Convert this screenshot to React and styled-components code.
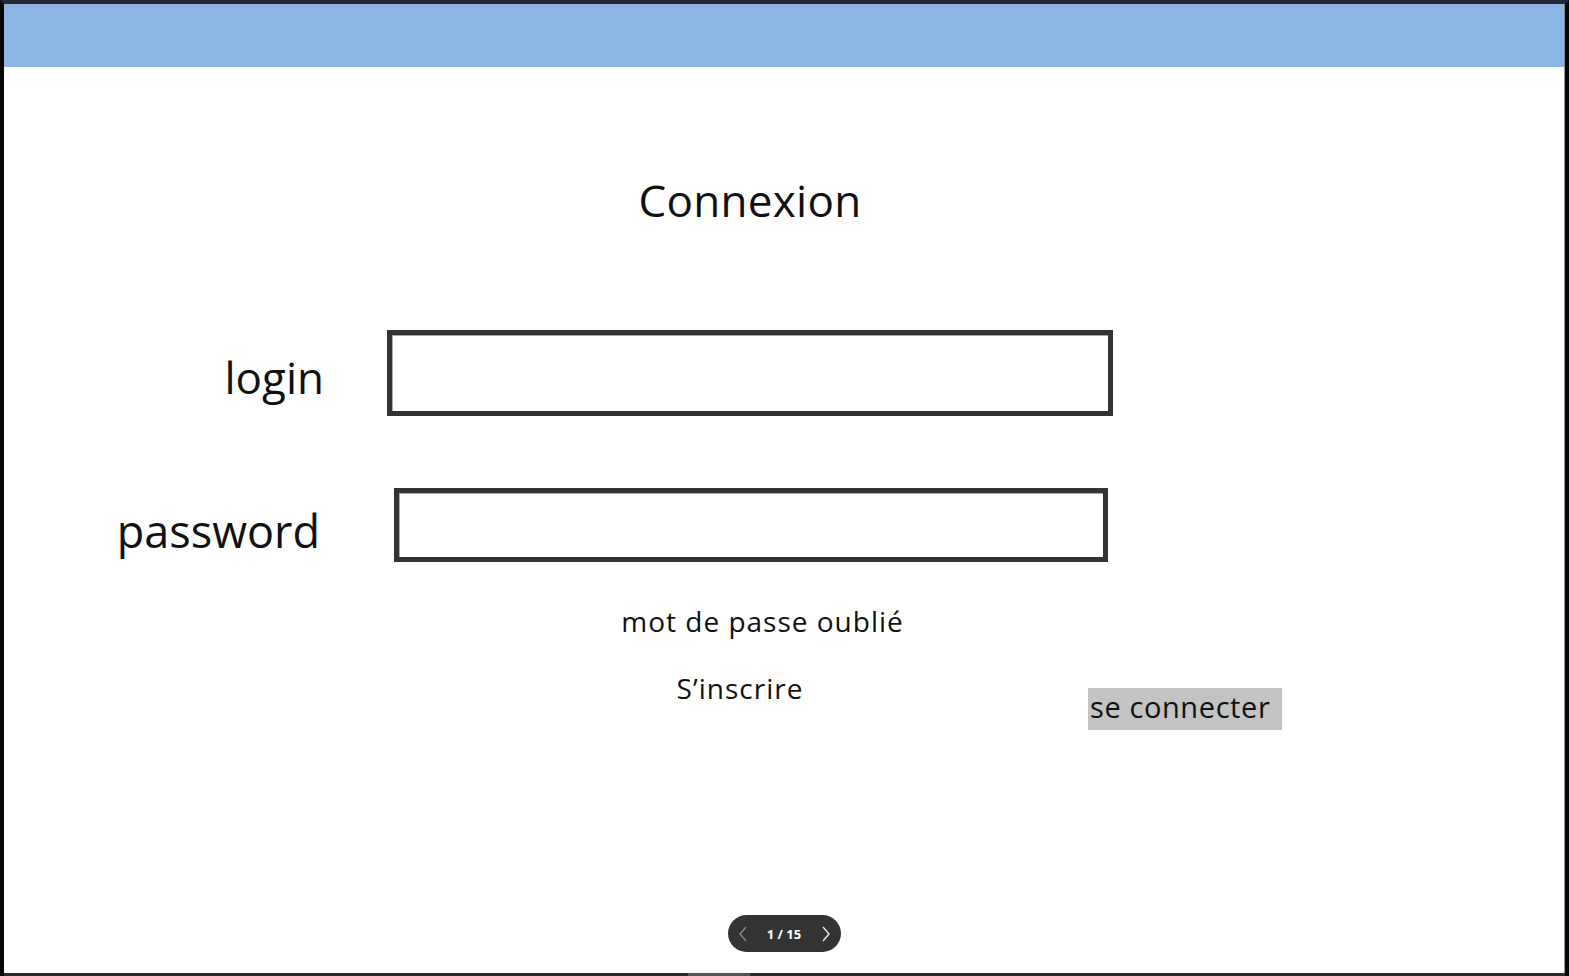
import styled, { createGlobalStyle } from "styled-components";

const Global = createGlobalStyle`
    html, body { margin: 0; padding: 0; background: #000; }
    body { font-family: "Open Sans", "Liberation Sans", sans-serif; color: #111; }
    * { box-sizing: border-box; }
`

const Frame = styled.div`
    height: 976px;
    display: flex;
    flex-direction: column;
    border-top: 4px solid #232a35;
    border-left: 4px solid #050505;
    border-right: 4px solid #050505;
    background: #fff;
    overflow: hidden;
`
const Header = styled.div`
    height: 63px;
    flex-shrink: 0;
    background: #8db5e3;
    border-right: 1px solid #7d8da0;
`
const Main = styled.div`
    flex: 1;
    display: flex;
    flex-direction: column;
    border-right: 1px solid #9a9a9a;
`
const Title = styled.div`
    margin-top: 107px;
    padding-right: 68px;
    text-align: center;
    font-size: 44px;
    letter-spacing: 0.3px;
    line-height: 1.2;
`
const Row = styled.div`
    display: flex;
    align-items: center;
    margin-top: ${p => p.$top}px;
`
const Label = styled.div`
    width: ${p => p.$w}px;
    text-align: right;
    font-size: ${p => p.$size}px;
    line-height: 1;
    padding-top: ${p => p.$dy || 0}px;
`
const Field = styled.div`
    margin-left: ${p => p.$gap}px;
    width: ${p => p.$w}px;
    height: ${p => p.$h}px;
    border: 5px solid #333;
    background: #fff;
    box-shadow: inset 1px 1px 0 #aaa;
`
const Forgot = styled.div`
    margin-top: 43px;
    padding-right: 43px;
    text-align: center;
    font-size: 28px;
    letter-spacing: 1px;
    line-height: 1.2;
`
const ActionRow = styled.div`
    display: flex;
    align-items: flex-start;
    margin-top: 34px;
    padding-left: 572px;
`
const SignUp = styled.div`
    width: 328px;
    text-align: center;
    font-size: 28px;
    letter-spacing: 1px;
    line-height: 1.2;
`
const Button = styled.div`
    margin-left: 184px;
    margin-top: 16px;
    width: 194px;
    height: 42px;
    background: #c3c3c3;
    font-size: 29px;
    letter-spacing: 0.6px;
    line-height: 38px;
    padding-left: 2px;
    white-space: nowrap;
`
const Pager = styled.div`
    margin: auto auto 21px;
    width: 113px;
    height: 37px;
    border-radius: 19px;
    background: #333;
    display: flex;
    align-items: center;
    justify-content: space-between;
    padding: 0 8px 0 8px;
    color: #fff;
    font-size: 13px;
    font-weight: 700;
`
const Chevron = styled.svg`
    width: 14px;
    height: 18px;
    stroke: ${p => p.$dim ? "#8a8a8a" : "#eee"};
    fill: none;
    stroke-width: 1.4;
`
const BottomBar = styled.div`
    height: 3px;
    flex-shrink: 0;
    background: #2b2b2b;
    display: flex;
`
const Thumb = styled.div`
    margin-left: 684px;
    width: 62px;
    background: #555;
`

export default function App(){
    return <>
        <Global />
        <Frame>
            <Header />
            <Main>
                <Title>Connexion</Title>
                <Row $top={103}>
                    <Label $w={320} $size={44} $dy={8}>login</Label>
                    <Field $gap={63} $w={726} $h={86} />
                </Row>
                <Row $top={72}>
                    <Label $w={316} $size={45} $dy={12}>password</Label>
                    <Field $gap={74} $w={714} $h={74} />
                </Row>
                <Forgot>mot de passe oublié</Forgot>
                <ActionRow>
                    <SignUp>S’inscrire</SignUp>
                    <Button>se connecter</Button>
                </ActionRow>
                <Pager>
                    <Chevron $dim viewBox="0 0 14 18"><path d="M10 2 L4 9 L10 16" /></Chevron>
                    <span>1 / 15</span>
                    <Chevron viewBox="0 0 14 18"><path d="M4 2 L10 9 L4 16" /></Chevron>
                </Pager>
            </Main>
            <BottomBar><Thumb /></BottomBar>
        </Frame>
    </>
}
